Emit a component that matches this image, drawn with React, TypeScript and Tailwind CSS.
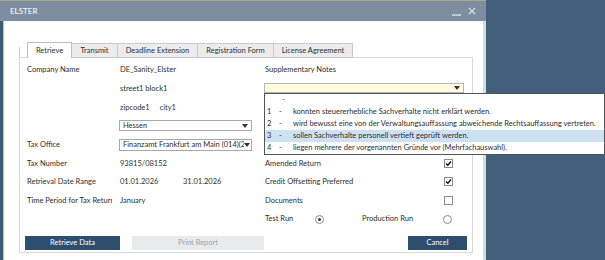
import React from "react";

function Arrow() {
  return (
    <svg width="6" height="4" viewBox="0 0 6 4" className="shrink-0">
      <path d="M0 0 L6 0 L3 4 Z" fill="#333" />
    </svg>
  );
}

function Check({ checked }: { checked: boolean }) {
  return (
    <div className="w-[9px] h-[9px] border border-[#8c8c8c] bg-white flex items-center justify-center">
      {checked && (
        <svg width="7" height="7" viewBox="0 0 7 7">
          <path d="M1 3.5 L2.8 5.3 L6 1.5" stroke="#111" strokeWidth="1.4" fill="none" />
        </svg>
      )}
    </div>
  );
}

function Radio({ on }: { on: boolean }) {
  return (
    <div className="w-[9px] h-[9px] rounded-full border border-[#8c8c8c] bg-white flex items-center justify-center shrink-0">
      {on && <div className="w-[3px] h-[3px] rounded-full bg-[#333]" />}
    </div>
  );
}

const tabs = [
  { t: "Retrieve", w: "w-[45px]", sel: true },
  { t: "Transmit", w: "w-[46px]", sel: false },
  { t: "Deadline Extension", w: "w-[80px]", sel: false },
  { t: "Registration Form", w: "w-[76px]", sel: false },
  { t: "License Agreement", w: "w-[79px]", sel: false },
];

const notes = [
  { n: "1", t: "konnten steuererhebliche Sachverhalte nicht erklärt werden." },
  { n: "2", t: "wird bewusst eine von der Verwaltungsauffassung abweichende Rechtsauffassung vertreten." },
  { n: "3", t: "sollen Sachverhalte personell vertieft geprüft werden.", hl: true },
  { n: "4", t: "liegen mehrere der vorgenannten Gründe vor (Mehrfachauswahl)." },
];

export default function App() {
  return (
    <div className="w-[605px] h-[260px] bg-[#415f7a] overflow-hidden font-['Lato',sans-serif] text-[7.5px] text-[#2e2e2e] leading-none">
      <div className="w-[486px] h-[260px] flex flex-col">
        {/* Title bar */}
        <div className="h-[21px] shrink-0 bg-[#7d8ea0] border-t border-[#a9a88c] flex items-center pl-[10px] pr-[10px] text-white text-[8px]">
          <span>ELSTER</span>
          <div className="ml-auto flex items-center gap-[7px]">
            <svg width="9" height="9" viewBox="0 0 9 9">
              <path d="M0 8 L9 8" stroke="#d5dbe1" strokeWidth="1.5" />
            </svg>
            <svg width="8" height="8" viewBox="0 0 8 8">
              <path d="M1 1 L7 7 M7 1 L1 7" stroke="#d5dbe1" strokeWidth="1.3" />
            </svg>
          </div>
        </div>
        {/* Body */}
        <div className="flex-1 flex bg-[#3d5a75] pl-[3px]">
          <div className="flex-1 bg-white border-l border-[#b9bfc6] border-r-[3px] border-r-[#d6dadf] pt-[21px] pl-[15px]">
            {/* Tabs */}
            <div className="flex items-end h-[16px] relative z-[1] -mb-[1px]">
              <div className="w-[8px] h-[11px] border-l border-[#cfcfcf]" />
              {tabs.map((tab) => (
                <div
                  key={tab.t}
                  className={
                    tab.sel
                      ? `${tab.w} h-[16px] bg-white border border-b-0 border-[#bdbdbd] flex items-center justify-center`
                      : `${tab.w} h-[15px] bg-[#ececec] border border-l-0 border-[#c9c9c9] flex items-center justify-center`
                  }
                >
                  {tab.t}
                </div>
              ))}
            </div>
            {/* Panel */}
            <div className="w-[454px] h-[196px] border border-[#d9d9d9] bg-white pt-[3px] pb-[2px] flex flex-col">
              <div className="flex pl-[7px]">
                {/* Left column */}
                <div className="w-[226px] flex flex-col">
                  <div className="h-[18px] flex items-center">
                    <span className="w-[93px]">Company Name</span>
                    <span>DE_Sanity_Elster</span>
                  </div>
                  <div className="h-[19px] flex items-center">
                    <span className="w-[93px]" />
                    <span>street1 block1</span>
                  </div>
                  <div className="h-[19px] flex items-center">
                    <span className="w-[93px]" />
                    <span>zipcode1</span>
                    <span className="ml-[10px]">city1</span>
                  </div>
                  <div className="h-[17px] flex items-center">
                    <span className="w-[92px]" />
                    <div className="w-[133px] h-[11px] border border-[#a9a9a9] bg-white flex items-center pl-[3px] pr-[3px]">
                      <span className="flex-1">Hessen</span>
                      <Arrow />
                    </div>
                  </div>
                  <div className="h-[21px] flex items-center">
                    <span className="w-[92px]">Tax Office</span>
                    <div className="w-[133px] h-[12px] border border-[#a9a9a9] bg-white flex items-center pl-[3px] pr-[1px]">
                      <span className="flex-1 overflow-hidden whitespace-nowrap">Finanzamt Frankfurt am Main (014)(2620)</span>
                      <Arrow />
                    </div>
                  </div>
                  <div className="h-[17px] flex items-center">
                    <span className="w-[93px]">Tax Number</span>
                    <span>93815/08152</span>
                  </div>
                  <div className="h-[19px] flex items-center">
                    <span className="w-[93px]">Retrieval Date Range</span>
                    <span className="w-[63px]">01.01.2026</span>
                    <span>31.01.2026</span>
                  </div>
                  <div className="h-[19px] flex items-center">
                    <div className="w-[93px]">
                      <div className="w-[85px] overflow-hidden whitespace-nowrap">Time Period for Tax Return</div>
                    </div>
                    <span>January</span>
                  </div>
                </div>
                {/* Right column */}
                <div className="w-[200px] ml-[11px] flex flex-col">
                  <div className="h-[18px] flex items-center pl-[1px]">Supplementary Notes</div>
                  <div className="h-[19px] pt-[4px] relative">
                    <div className="w-[200px] h-[10px] border border-[#b5b5b5] bg-[#fffbe3] flex items-center justify-end pr-[3px]">
                      <Arrow />
                    </div>
                    <div className="absolute left-0 top-[14px] w-[341px] h-[62px] bg-white border border-[#555] z-10 flex flex-col">
                      <div className="h-[12px] flex items-center pl-[17px]">-</div>
                      {notes.map((r) => (
                        <div
                          key={r.n}
                          className={`h-[12px] flex items-center pl-[2px] whitespace-nowrap ${r.hl ? "bg-[#cde1f3]" : ""}`}
                        >
                          <span className="w-[12px]">{r.n}</span>
                          <span className="w-[14px]">-</span>
                          <span>{r.t}</span>
                        </div>
                      ))}
                    </div>
                  </div>
                  <div className="h-[57px]" />
                  <div className="h-[17px] flex items-center pl-[1px]">
                    <span className="w-[179px]">Amended Return</span>
                    <Check checked />
                  </div>
                  <div className="h-[19px] flex items-center pl-[1px]">
                    <span className="w-[179px]">Credit Offsetting Preferred</span>
                    <Check checked />
                  </div>
                  <div className="h-[19px] flex items-center pl-[1px]">
                    <span className="w-[179px]">Documents</span>
                    <Check checked={false} />
                  </div>
                  <div className="h-[18px] flex items-center pl-[1px]">
                    <span className="w-[50px]">Test Run</span>
                    <Radio on />
                    <span className="ml-[38px] w-[81px]">Production Run</span>
                    <Radio on={false} />
                  </div>
                </div>
              </div>
              {/* Buttons */}
              <div className="flex mt-[8px] pl-[5px] pr-[5px]">
                <div className="w-[95px] h-[14px] bg-[#2d4e6f] text-white flex items-center justify-center">Retrieve Data</div>
                <div className="w-[132px] h-[14px] ml-[12px] bg-[#e8ebee] text-[#a3a3a3] flex items-center justify-center">Print Report</div>
                <div className="w-[59px] h-[14px] ml-auto bg-[#2d4e6f] text-white flex items-center justify-center">Cancel</div>
              </div>
            </div>
          </div>
        </div>
      </div>
    </div>
  );
}
